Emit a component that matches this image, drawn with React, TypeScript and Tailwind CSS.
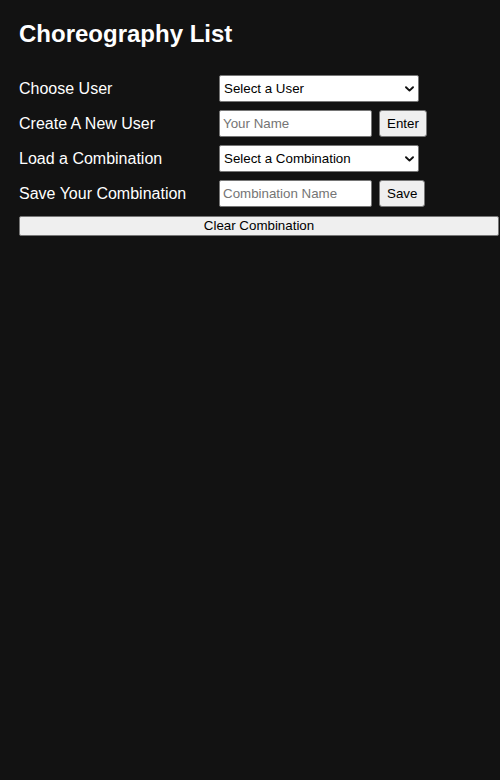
import React from "react";

function Chevron() {
  return (
    <svg
      className="pointer-events-none absolute right-[5px] top-1/2 -translate-y-1/2"
      width="9"
      height="6"
      viewBox="0 0 9 6"
      fill="none"
    >
      <path d="M1 1.2 L4.5 4.6 L8 1.2" stroke="#111" strokeWidth="1.9" strokeLinecap="round" strokeLinejoin="round" />
    </svg>
  );
}

function Select({ label }: { label: string }) {
  return (
    <div className="relative h-[27px] w-[200px]">
      <select className="h-full w-full appearance-none rounded-[2px] border border-[#767676] bg-white pl-[4px] text-[13.33px] text-black outline-none">
        <option>{label}</option>
      </select>
      <Chevron />
    </div>
  );
}

function InputWithButton({ placeholder, btn }: { placeholder: string; btn: string }) {
  return (
    <div className="flex items-center gap-[7px]">
      <input
        placeholder={placeholder}
        className="h-[27px] w-[153px] rounded-[2px] border border-[#767676] bg-white pl-[3px] text-[13.33px] text-black outline-none placeholder:text-[#757575]"
      />
      <button className="h-[27px] rounded-[3px] border border-[#767676] bg-[#efefef] px-[7px] text-[13.33px] text-black">
        {btn}
      </button>
    </div>
  );
}

export default function App() {
  return (
    <div
      className="min-h-[780px] w-[500px] bg-[#121212] pl-[19px] pt-[20px] text-white"
      style={{ fontFamily: '"Liberation Sans", Arial, sans-serif' }}
    >
      <h1 className="mb-[23px] text-[24px] font-bold leading-[28px]">Choreography List</h1>
      <div className="grid grid-cols-[200px_auto]">
        <div className="flex h-[35px] items-center text-[16px]">Choose User</div>
        <div className="flex h-[35px] items-center">
          <Select label="Select a User" />
        </div>
        <div className="flex h-[35px] items-center text-[16px]">Create A New User</div>
        <div className="flex h-[35px] items-center">
          <InputWithButton placeholder="Your Name" btn="Enter" />
        </div>
        <div className="flex h-[35px] items-center text-[16px]">Load a Combination</div>
        <div className="flex h-[35px] items-center">
          <Select label="Select a Combination" />
        </div>
        <div className="flex h-[35px] items-center text-[16px]">Save Your Combination</div>
        <div className="flex h-[35px] items-center">
          <InputWithButton placeholder="Combination Name" btn="Save" />
        </div>
      </div>
      <button className="mt-[5px] h-[20px] w-[480px] rounded-[2px] border border-[#767676] bg-[#efefef] text-[13.33px] leading-none text-black">
        Clear Combination
      </button>
    </div>
  );
}
